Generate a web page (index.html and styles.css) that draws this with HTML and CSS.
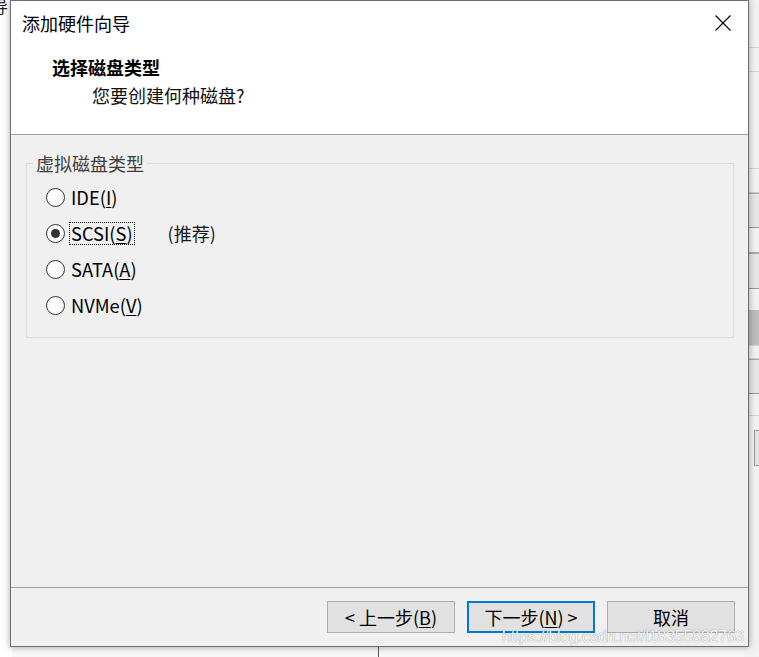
FILE: index.html
```html
<!DOCTYPE html>
<html lang="zh-CN">
<head>
<meta charset="utf-8">
<title>添加硬件向导</title>
<link rel="stylesheet" href="styles.css">
</head>
<body>
<div class="desktop">
  <div class="bg-left"><span class="bg-glyph">向导</span></div>
  <div class="bg-right">
    <div class="bgr r1"></div>
    <div class="bgr r2"></div>
    <div class="bgr r3"></div>
    <div class="bgr r4"></div>
    <div class="bgr r5 band"></div>
    <div class="bgr r6"></div>
    <div class="bgr r7 band"></div>
    <div class="bgr r8"></div>
    <div class="bgr r9 dark"></div>
    <div class="bgr r10"></div>
    <div class="bgr r11 band"></div>
    <div class="bgr r12"></div>
    <div class="bgr r13"><div class="bgbox"></div></div>
  </div>
  <div class="bg-bottom-line"></div>

  <div class="dialog">
    <div class="header">
      <div class="titlebar">
        <span class="title">添加硬件向导</span>
        <svg class="close" width="16" height="16" viewBox="0 0 16 16"><path d="M0.5 0.5 L15.5 15.5 M15.5 0.5 L0.5 15.5" stroke="#000" stroke-width="1.1" fill="none"/></svg>
      </div>
      <div class="heading">选择磁盘类型</div>
      <div class="subheading">您要创建何种磁盘?</div>
    </div>
    <div class="body">
      <fieldset class="group">
        <legend>虚拟磁盘类型</legend>
        <div class="radios">
          <div class="radio"><span class="circle"></span><span class="label">IDE(<u>I</u>)</span></div>
          <div class="radio"><span class="circle checked"></span><span class="label focus">SCSI(<u>S</u>)</span><span class="note">(推荐)</span></div>
          <div class="radio"><span class="circle"></span><span class="label">SATA(<u>A</u>)</span></div>
          <div class="radio"><span class="circle"></span><span class="label">NVMe(<u>V</u>)</span></div>
        </div>
      </fieldset>
    </div>
    <div class="footer">
      <button class="btn">&lt; 上一步(<u>B</u>)</button>
      <button class="btn primary">下一步(<u>N</u>) &gt;</button>
      <button class="btn">取消</button>
    </div>
  </div>
  <div class="watermark">https://blog.csdn.net/l18355882763</div>
</div>
</body>
</html>
```
FILE: styles.css
```css
* { box-sizing: border-box; }
html, body { margin: 0; padding: 0; }
body {
  font-family: "Noto Sans CJK SC", "Noto Sans", sans-serif;
  color: #000;
  background: #ffffff;
}
.desktop {
  position: relative;
  width: 759px;
  height: 657px;
  overflow: hidden;
  background: #f7f7f7;
}
.bg-left {
  position: absolute;
  left: 0; top: 0;
  width: 12px; height: 657px;
  background: #ffffff;
  overflow: hidden;
}
.bg-glyph {
  position: absolute;
  right: 4px; top: -5px;
  font-size: 17px;
  line-height: 22px;
  color: #222;
  white-space: nowrap;
}
.bg-right {
  position: absolute;
  left: 744px; top: 0;
  width: 15px; height: 657px;
  background: #f2f2f2;
  display: flex;
  flex-direction: column;
}
.bgr { border-bottom: 1px solid #d4d4d4; flex: none; }
.r1 { height: 48px; }
.r2 { height: 24px; }
.r3 { height: 97px; }
.r4 { height: 24px; border-bottom-color: #c8c8c8; }
.r5 { height: 35px; border-bottom-color: #999; }
.r6 { height: 25px; border-bottom-color: #aaa; }
.r7 { height: 36px; border-bottom-color: #999; }
.r8 { height: 21px; border-bottom: none; }
.r9 { height: 36px; border-bottom-color: #d0d0d0; }
.r10 { height: 13px; }
.r11 { height: 35px; border-bottom-color: #999; }
.r12 { height: 22px; }
.r13 { height: 60px; border-bottom: none; padding: 14px 0 0 10px; }
.band { background: #e6e6e6; border-top: 1px solid #aaa; }
.dark { background: #bdbdbd; }
.bgbox { width: 10px; height: 36px; border: 1px solid #999; background: #e5e5e5; }
.bg-bottom-line {
  position: absolute;
  left: 378px; top: 646px;
  width: 1px; height: 11px;
  background: #555;
}

.dialog {
  position: absolute;
  left: 10px; top: 0;
  width: 739px;
  height: 647px;
  border: 1px solid #6e6e6e;
  background: #f0f0f0;
  box-shadow: 0 0 7px rgba(0,0,0,0.35);
  display: flex;
  flex-direction: column;
}
.header {
  background: #ffffff;
  height: 134px;
  border-bottom: 1px solid #a0a0a0;
  padding: 10px 0 0 11px;
  flex: none;
}
.titlebar {
  display: flex;
  align-items: center;
  justify-content: space-between;
  height: 24px;
  padding-right: 17px;
}
.title {
  font-size: 18px;
  line-height: 24px;
  color: #000;
}
.close { display: block; }
.heading {
  margin: 20px 0 0 30px;
  font-size: 18px;
  line-height: 24px;
  font-weight: bold;
}
.subheading {
  margin: 4px 0 0 70px;
  font-size: 18px;
  line-height: 24px;
  color: #111;
}
.body {
  flex: 1;
  padding: 16px 14px 0 15px;
}
.group {
  margin: 0;
  border: 1px solid #dcdcdc;
  padding: 4px 14px 14px 6px;
  min-width: 0;
}
.group legend {
  padding: 0 3px;
  font-size: 18px;
  line-height: 24px;
  color: #3e3e3e;
}
.radios {
  margin-left: 13px;
  display: flex;
  flex-direction: column;
}
.radio {
  display: flex;
  align-items: center;
  height: 36px;
}
.circle {
  width: 19px;
  height: 19px;
  border: 1px solid #333;
  border-radius: 50%;
  background: #fff;
  display: flex;
  align-items: center;
  justify-content: center;
  flex: none;
}
.circle.checked::after {
  content: "";
  width: 9px;
  height: 9px;
  border-radius: 50%;
  background: #333;
}
.label {
  margin-left: 4px;
  padding: 0 1px;
  font-size: 18.3px;
  line-height: 21px;
  border: 1px solid transparent;
}
.label.focus { border: 1px dotted #000; }
.note {
  margin-left: 33px;
  font-size: 18px;
  line-height: 21px;
  color: #1a1a1a;
}
u { text-decoration-thickness: 1px; text-underline-offset: 2px; }
.footer {
  flex: none;
  height: 59px;
  border-top: 1px solid #a0a0a0;
  display: flex;
  justify-content: flex-end;
  align-items: flex-start;
  gap: 12px;
  padding: 13px 13px 0 0;
}
.btn {
  width: 128px;
  height: 32px;
  border: 1px solid #adadad;
  background: #e1e1e1;
  font-family: "Noto Sans CJK SC", "Noto Sans", sans-serif;
  font-size: 18px;
  line-height: 24px;
  color: #000;
  padding: 0;
}
.btn.primary { border: 2px solid #0078d7; }
.watermark {
  position: absolute;
  left: 502px; top: 627px;
  font-family: "Liberation Sans", Arial, sans-serif;
  font-size: 16px;
  line-height: 20px;
  color: rgba(255,255,255,0.95);
  text-shadow: 0 0 1px rgba(0,0,0,0.5);
  white-space: nowrap;
  letter-spacing: -0.2px;
}
```
